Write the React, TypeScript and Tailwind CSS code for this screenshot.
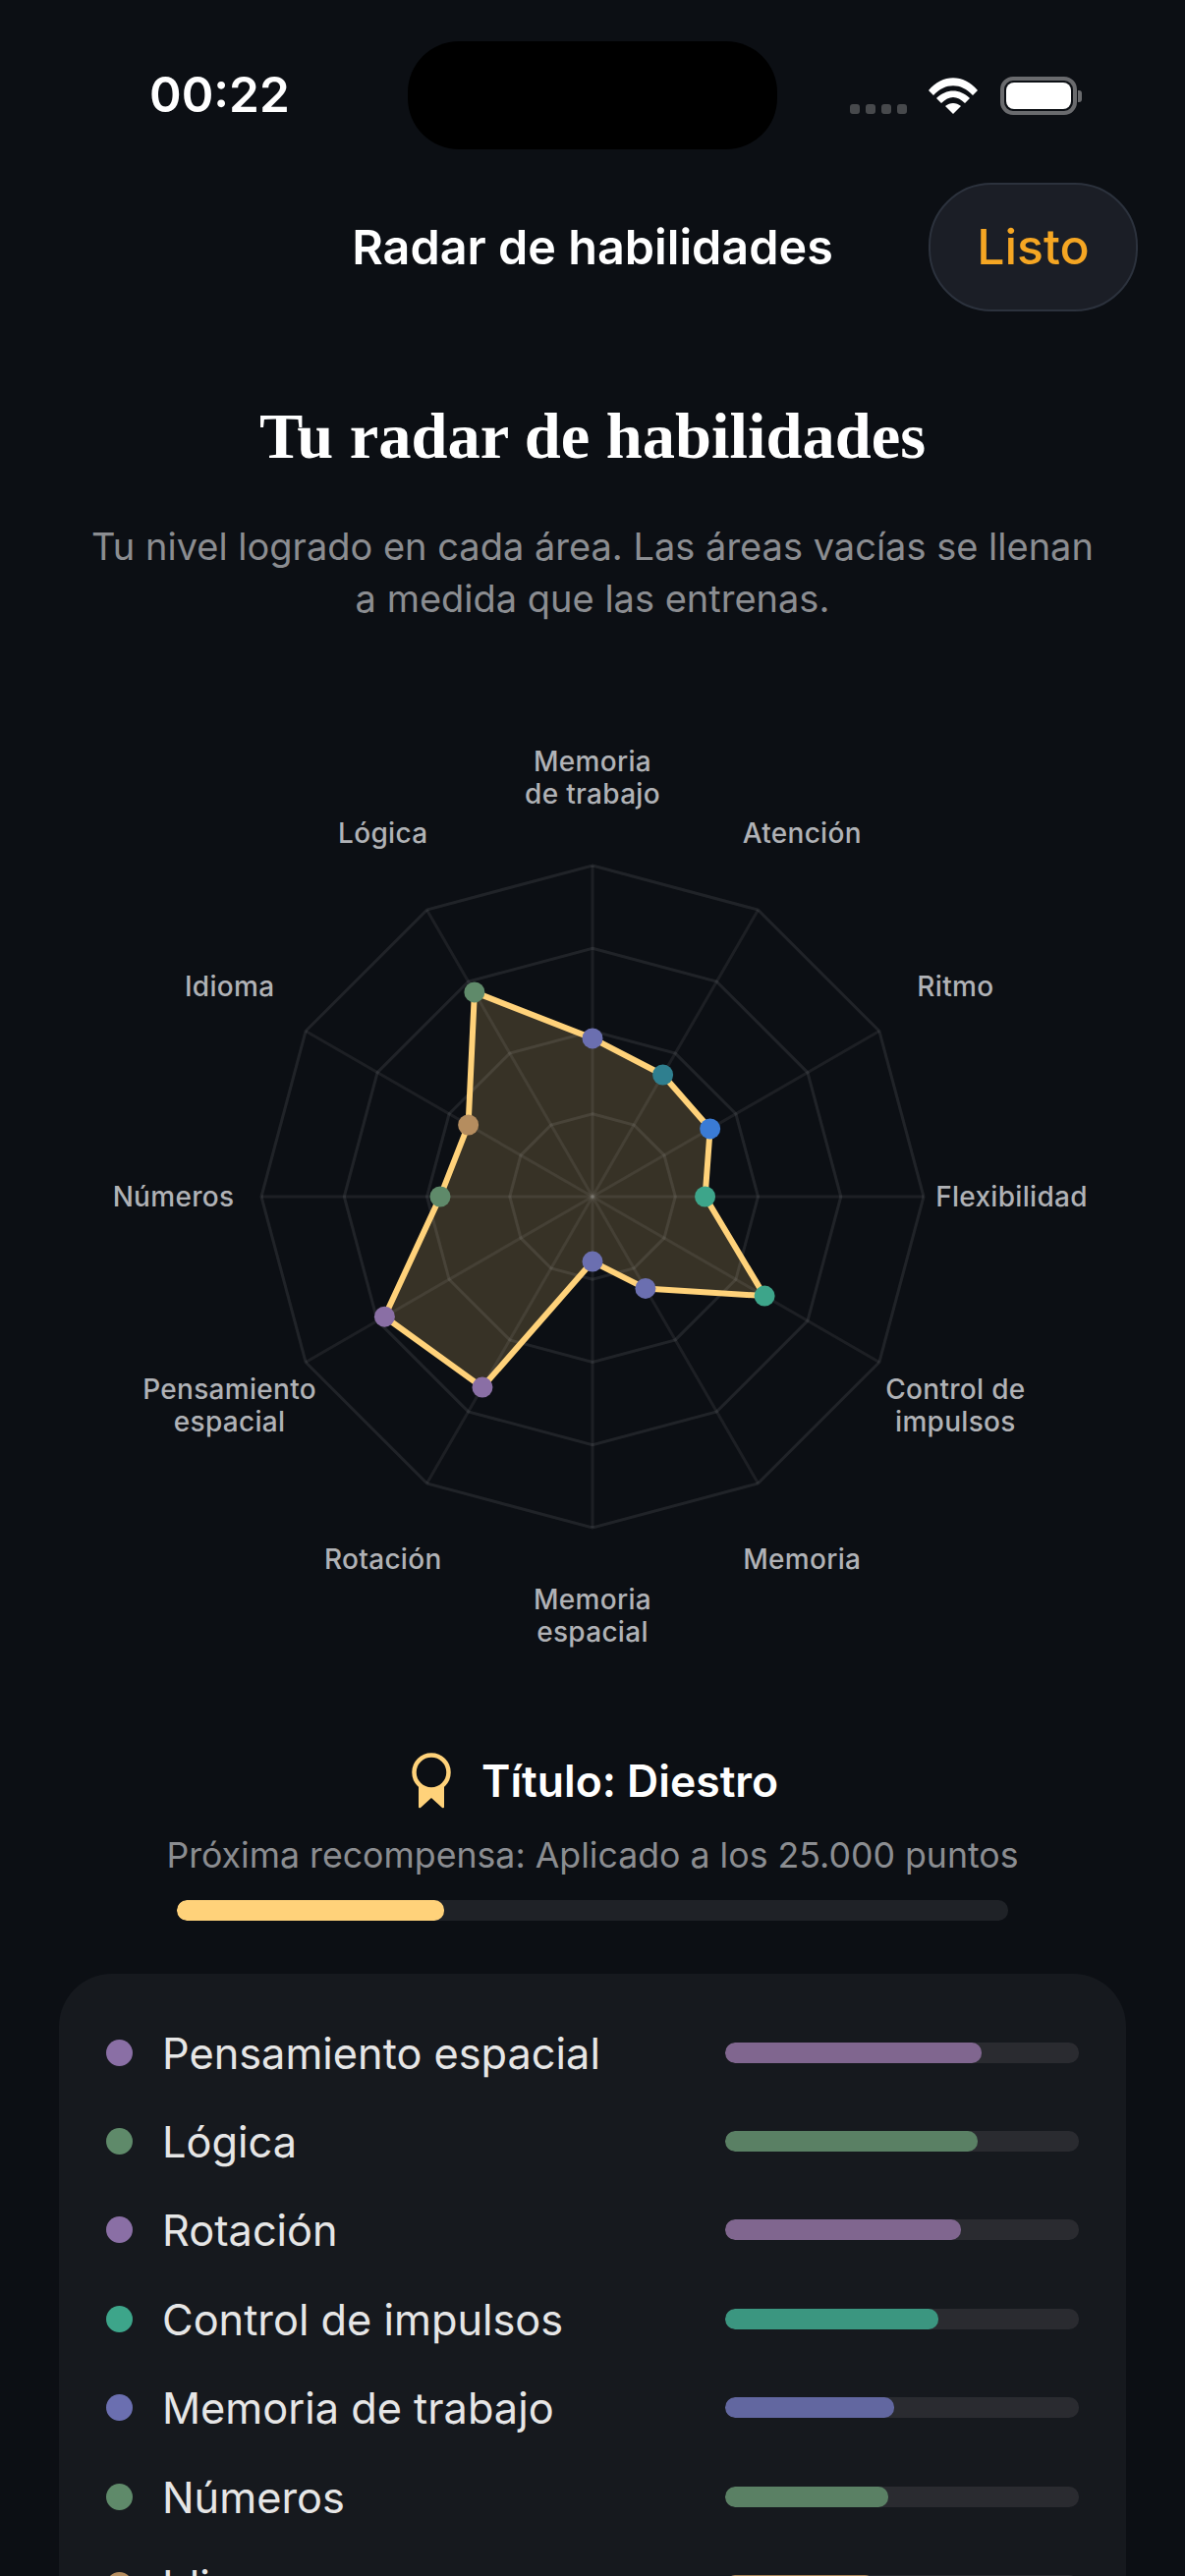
const CX = 603;
const CY = 477;
const R = 337;
const LR = 426.5;
const AMBER = "#ffd27a";

const axes = [
  { lines: ["Memoria", "de trabajo"], v: 0.478, c: "#6b6fb0" },
  { lines: ["Atención"], v: 0.425, c: "#2f7f8f" },
  { lines: ["Ritmo"], v: 0.41, c: "#3a7bd5" },
  { lines: ["Flexibilidad"], v: 0.34, c: "#3da58a" },
  { lines: ["Control de", "impulsos"], v: 0.6, c: "#3da58a" },
  { lines: ["Memoria"], v: 0.32, c: "#6b6fb0" },
  { lines: ["Memoria", "espacial"], v: 0.196, c: "#6b6fb0" },
  { lines: ["Rotación"], v: 0.665, c: "#8a6fa5" },
  { lines: ["Pensamiento", "espacial"], v: 0.725, c: "#8a6fa5" },
  { lines: ["Números"], v: 0.46, c: "#5f8a6a" },
  { lines: ["Idioma"], v: 0.433, c: "#b58d5f" },
  { lines: ["Lógica"], v: 0.713, c: "#5f8a6a" },
];

const pt = (i: number, r: number) => {
  const a = (i * Math.PI) / 6 - Math.PI / 2;
  return [CX + r * Math.cos(a), CY + r * Math.sin(a)];
};
const poly = (fn: (i: number) => number) =>
  axes.map((_, i) => pt(i, fn(i)).map((n) => n.toFixed(1)).join(",")).join(" ");

const rows = [
  { name: "Pensamiento espacial", w: 261, c: "#8a6fa5", b: "#80668f" },
  { name: "Lógica", w: 257, c: "#5f8a6a", b: "#5a8064" },
  { name: "Rotación", w: 240, c: "#8a6fa5", b: "#80668f" },
  { name: "Control de impulsos", w: 217, c: "#3da58a", b: "#3b9680" },
  { name: "Memoria de trabajo", w: 172, c: "#6b6fb0", b: "#6267a0" },
  { name: "Números", w: 166, c: "#5f8a6a", b: "#5a8064" },
  { name: "Idioma", w: 152, c: "#b58d5f", b: "#a88459" },
];

function Radar() {
  return (
    <svg width="1206" height="960" viewBox="0 0 1206 960" className="block">
      <polygon points={poly((i) => axes[i].v * R)} fill={AMBER} fillOpacity="0.18" />
      {[1, 2, 3, 4].map((k) => (
        <polygon key={k} points={poly(() => (R * k) / 4)} fill="none" stroke="#ffffff" strokeOpacity="0.085" strokeWidth="3" />
      ))}
      {axes.map((_, i) => {
        const [x, y] = pt(i, R);
        return <line key={i} x1={CX} y1={CY} x2={x} y2={y} stroke="#ffffff" strokeOpacity="0.07" strokeWidth="3" />;
      })}
      <polygon
        points={poly((i) => axes[i].v * R)}
        fill="none"
        stroke={AMBER}
        strokeWidth="6"
        strokeLinejoin="round"
      />
      {axes.map((a, i) => {
        const [x, y] = pt(i, a.v * R);
        return <circle key={i} cx={x} cy={y} r="10.5" fill={a.c} />;
      })}
      {axes.map((a, i) => {
        const [x, y] = pt(i, LR);
        return (
          <text
            key={i}
            x={x}
            y={y - ((a.lines.length - 1) * 33) / 2 + 9.5}
            textAnchor="middle"
            fill="#b0b2b6"
            fontSize="28"
            fontWeight="500"
            fontFamily="Inter, sans-serif"
            letterSpacing="0.3"
          >
            {a.lines.map((l, j) => (
              <tspan key={j} x={x} dy={j === 0 ? 0 : 33}>
                {l}
              </tspan>
            ))}
          </text>
        );
      })}
    </svg>
  );
}

function Medal() {
  return (
    <svg width="40" height="58" viewBox="0 0 40 58" className="block">
      <path d="M7 34 H33 V55 Q33 57 31 56 L20 46 L9 56 Q7 57 7 55 Z" fill={AMBER} />
      <circle cx="20" cy="20" r="17.5" fill="#0c0f14" stroke={AMBER} strokeWidth="4.5" />
    </svg>
  );
}

export default function App() {
  return (
    <div className="w-[1206px] h-[2622px] overflow-hidden bg-[#0c0f14] font-['Inter',sans-serif] text-white">
      <div className="h-[186px] pt-[42px] pl-[152px] flex items-start">
        <div className="w-[263px] h-[110px] flex items-center text-[49.5px] font-semibold leading-none">00:22</div>
        <div className="w-[376px] h-[110px] rounded-[52px] bg-black" />
        <div className="relative ml-[74px] w-[236px] h-[110px]">
          <div className="absolute left-0 top-[64px] flex gap-[6px]">
            {[0, 1, 2, 3].map((i) => (
              <div key={i} className="w-[10px] h-[10px] rounded-[3px] bg-[#47494c]" />
            ))}
          </div>
          <svg className="absolute left-[79px] top-[36px]" width="52" height="39" viewBox="0 0 52 39">
            <path d="M1 14 C15 -3 37 -3 51 14 L46 19 C34 6 18 6 6 19 Z" fill="#fff" />
            <path d="M9 22 C19 12 33 12 43 22 L38 27 C30 19 22 19 14 27 Z" fill="#fff" />
            <path d="M18 30 C23 26 29 26 34 30 L26 38 Z" fill="#fff" />
          </svg>
          <div className="absolute left-[153px] top-[36px] w-[78px] h-[39px] rounded-[13px] border-[4px] border-[#6a6b6e] p-[2px]">
            <div className="w-full h-full rounded-[8px] bg-white" />
          </div>
          <div className="absolute left-[232px] top-[50px] w-[4px] h-[12px] rounded-r-[3px] bg-[#6a6b6e]" />
        </div>
      </div>

      <div className="relative h-[131px] flex items-center justify-center">
        <div className="text-[48.5px] font-semibold leading-none pt-[2px]">Radar de habilidades</div>
        <div className="absolute right-[48px] top-0 w-[213px] h-[131px] rounded-[64px] bg-[#1b1e26] border-2 border-[#2c323d] flex items-center justify-center text-[50px] font-medium text-[#f5a623]">
          Listo
        </div>
      </div>

      <h1 className="mt-[89px] text-center font-['Liberation_Serif',serif] font-bold text-[66.5px] leading-[76px]">
        Tu radar de habilidades
      </h1>

      <p className="mt-[48px] text-center text-[38px] leading-[53px] text-[#8b8d91]">
        Tu nivel logrado en cada área. Las áreas vacías se llenan
        <br />a medida que las entrenas.
      </p>

      <div className="mt-[105px]">
        <Radar />
      </div>

      <div className="mt-[84px] h-[56px] flex items-center pl-[419px] gap-[31px]">
        <Medal />
        <div className="text-[44.5px] font-semibold leading-none">Título: Diestro</div>
      </div>

      <div className="mt-[22px] text-center text-[35.7px] leading-[50px] text-[#8b8d91]">
        Próxima recompensa: Aplicado a los 25.000 puntos
      </div>

      <div className="mt-[21px] mx-[180px] h-[21px] rounded-[10px] bg-[#1f2227] overflow-hidden">
        <div className="h-full w-[272px] rounded-[10px] bg-[#ffd27a]" />
      </div>

      <div className="mt-[54px] mx-[60px] rounded-[54px] bg-[#16191e] pt-[35px] pl-[48px] pr-[48px] h-[700px]">
        {rows.map((r) => (
          <div key={r.name} className="h-[90.4px] flex items-center">
            <div className="w-[27px] h-[27px] rounded-full shrink-0" style={{ backgroundColor: r.c }} />
            <div className="ml-[30px] flex-1 pt-[2px] text-[43.3px] leading-none text-[#e6e6e6]">{r.name}</div>
            <div className="w-[360px] h-[21px] rounded-[10px] bg-[#2a2b30] overflow-hidden">
              <div className="h-full rounded-[10px]" style={{ width: r.w, backgroundColor: r.b }} />
            </div>
          </div>
        ))}
      </div>
    </div>
  );
}
